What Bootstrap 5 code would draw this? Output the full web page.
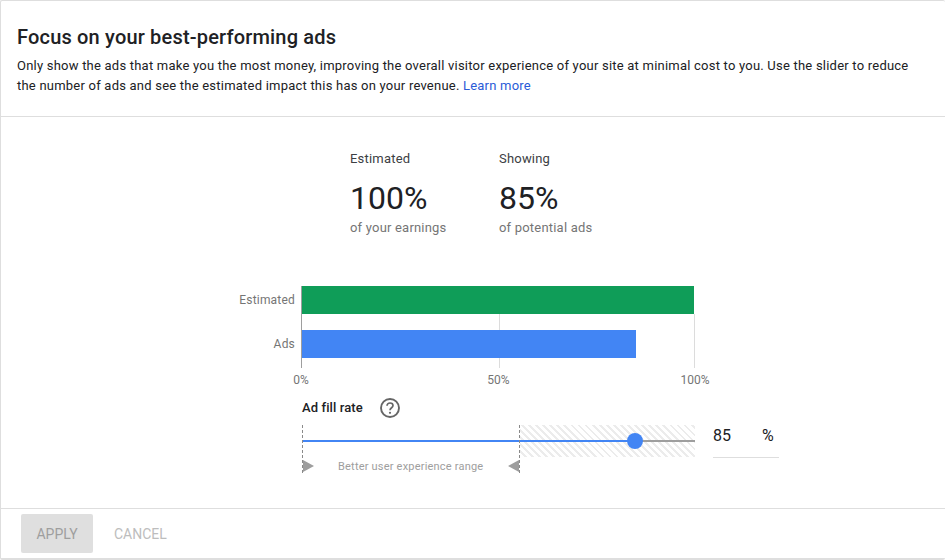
<!DOCTYPE html>
<html lang="en">
<head>
    <meta charset="utf-8">
    <meta name="viewport" content="width=device-width, initial-scale=1.0">
    <title>Focus on your best-performing ads</title>
    <link href="https://cdn.jsdelivr.net/npm/bootstrap@5.3.0/dist/css/bootstrap.min.css" rel="stylesheet">
    <style>
        html, body { height: 100%; overflow: hidden; }
        body { font-family: Roboto, "Liberation Sans", sans-serif; color: #202124; background: #fff; }
        .panel-box { width: 945px; height: 560px; border: 1px solid #dedede; border-right: 0; border-bottom-width: 2px; border-radius: 2px; }
        .panel-head { height: 116px; padding: 24px 16px 0; border-bottom: 1px solid #dedede; }
        .panel-title { font-size: 20px; line-height: 24px; font-weight: 500; letter-spacing: .18px; margin: 0 0 7px; }
        .panel-desc { font-size: 13px; line-height: 20px; letter-spacing: .22px; margin: 0; width: 900px; }
        .panel-desc a { color: #2a5bd7; text-decoration: none; }
        .panel-body { flex: 1 1 auto; padding-top: 33px; }
        .stat-wrap { margin-left: 349px; gap: 53px; height: 136px; }
        .stat-item { width: 96px; }
        .stat-label { font-size: 13px; line-height: 18px; letter-spacing: .2px; color: #3c4043; }
        .stat-value { font-size: 32px; line-height: 40px; margin-top: 10px; }
        .stat-note { font-size: 13px; line-height: 18px; letter-spacing: .2px; color: #757575; margin-top: 1px; }
        .chart-area { margin-left: 300px; width: 393px; height: 82px; position: relative; border-left: 1px solid #9e9e9e; }
        .grid-line { position: absolute; top: 28px; bottom: 0; width: 1px; background: #dcdcdc; }
        .grid-mid { left: 197px; }
        .grid-end { left: 392px; }
        .bar-row { height: 28px; margin-bottom: 16px; position: relative; }
        .bar-row:last-of-type { margin-bottom: 0; }
        .bar-fill { height: 100%; position: relative; }
        .bar-green { background: #0f9d58; width: 100%; }
        .bar-blue { background: #4285f4; width: 85.2%; }
        .bar-label { position: absolute; right: 100%; top: 0; margin-right: 7px; font-size: 12px; line-height: 28px; color: #757575; letter-spacing: .2px; }
        .axis-row { margin-left: 301px; width: 393px; height: 20px; position: relative; }
        .axis-tick { position: absolute; top: 5px; transform: translateX(-50%); font-size: 12px; line-height: 14px; color: #757575; }
        .fill-head { margin-left: 301px; height: 33px; margin-top: 4px; gap: 17px; padding-bottom: 1px; }
        .fill-title { font-size: 13px; font-weight: 500; letter-spacing: .1px; color: #202124; }
        .slider-row { margin-left: 301px; height: 64px; }
        .slider-box { width: 393px; height: 64px; position: relative; }
        .dash-line { position: absolute; top: 0; height: 48px; border-left: 1px dashed #8a8a8a; }
        .dash-a { left: 0; }
        .dash-b { left: 217px; }
        .hatch-zone { position: absolute; left: 218px; right: 0; top: 0; height: 32px;
            background: repeating-linear-gradient(45deg, #fff 0 3px, #ececec 3px 5px); }
        .track-line { position: absolute; left: 0; right: 0; top: 15px; height: 2px; background: #9e9e9e; }
        .track-done { position: absolute; left: 0; top: 15px; height: 2px; background: #4285f4; }
        .track-thumb { position: absolute; top: 8px; width: 16px; height: 16px; margin-left: -8px; border-radius: 50%; background: #4285f4; }
        .range-caption { position: absolute; left: 36px; top: 35px; font-size: 11px; line-height: 14px; letter-spacing: .2px; color: #9e9e9e; }
        .range-arrow { position: absolute; top: 35px; width: 0; height: 0; border-top: 6px solid transparent; border-bottom: 6px solid transparent; }
        .arrow-r { left: 1px; border-left: 11px solid #9e9e9e; }
        .arrow-l { left: 206px; border-right: 11px solid #9e9e9e; }
        .fill-input { margin-left: 18px; width: 66px; height: 33px; border-bottom: 1px solid #dedede; font-size: 16px; line-height: 22px; }
        .fill-input span:last-child { margin-left: 31px; }
        .panel-foot { height: 50px; border-top: 1px solid #dedede; padding: 5px 20px 0; gap: 21px; }
        .btn-apply { width: 72px; height: 39px; padding: 2px 0 0; border: 0; border-radius: 2px; font-size: 14px; background: #dfdfdf; color: #9e9e9e; }
        .btn-cancel { height: 39px; padding: 2px 0 0; border: 0; font-size: 14px; background: none; color: #bdbdbd; }
    </style>
</head>
<body>
    <div class="panel-box d-flex flex-column">
        <div class="panel-head">
            <h1 class="panel-title">Focus on your best-performing ads</h1>
            <p class="panel-desc">Only show the ads that make you the most money, improving the overall visitor experience of your site at minimal cost to you. Use the slider to reduce the number of ads and see the estimated impact this has on your revenue. <a href="#">Learn more</a></p>
        </div>
        <div class="panel-body">
            <div class="stat-wrap d-flex">
                <div class="stat-item">
                    <div class="stat-label">Estimated</div>
                    <div class="stat-value">100%</div>
                    <div class="stat-note text-nowrap">of your earnings</div>
                </div>
                <div class="stat-item">
                    <div class="stat-label">Showing</div>
                    <div class="stat-value">85%</div>
                    <div class="stat-note text-nowrap">of potential ads</div>
                </div>
            </div>
            <div class="chart-area">
                <div class="grid-line grid-mid"></div>
                <div class="grid-line grid-end"></div>
                <div class="bar-row"><span class="bar-label">Estimated</span><div class="bar-fill bar-green"></div></div>
                <div class="bar-row"><span class="bar-label">Ads</span><div class="bar-fill bar-blue"></div></div>
            </div>
            <div class="axis-row">
                <span class="axis-tick" style="left: -1px">0%</span>
                <span class="axis-tick" style="left: 50%">50%</span>
                <span class="axis-tick" style="left: 100%">100%</span>
            </div>
            <div class="fill-head d-flex align-items-center">
                <span class="fill-title">Ad fill rate</span>
                <svg width="20" height="20" viewBox="0 0 20 20" aria-hidden="true">
                    <circle cx="10" cy="10" r="9" fill="none" stroke="#666" stroke-width="1.9"/>
                    <path d="M7 7.8c0-1.7 1.3-2.8 3-2.8s3 1.1 3 2.6c0 2.1-3 2.2-3 4.6" fill="none" stroke="#666" stroke-width="1.7"/>
                    <circle cx="10" cy="14.8" r="1.1" fill="#666"/>
                </svg>
            </div>
            <div class="slider-row d-flex">
                <div class="slider-box">
                    <div class="hatch-zone"></div>
                    <div class="track-line"></div>
                    <div class="track-done" style="width: 84.8%"></div>
                    <div class="track-thumb" style="left: 84.8%"></div>
                    <div class="dash-line dash-a"></div>
                    <div class="dash-line dash-b"></div>
                    <div class="range-arrow arrow-r"></div>
                    <div class="range-arrow arrow-l"></div>
                    <div class="range-caption">Better user experience range</div>
                </div>
                <div class="fill-input"><span>85</span><span>%</span></div>
            </div>
        </div>
        <div class="panel-foot d-flex">
            <button class="btn-apply" disabled>APPLY</button>
            <button class="btn-cancel" disabled>CANCEL</button>
        </div>
    </div>
    <script src="https://cdn.jsdelivr.net/npm/bootstrap@5.3.0/dist/js/bootstrap.bundle.min.js"></script>
</body>
</html>
